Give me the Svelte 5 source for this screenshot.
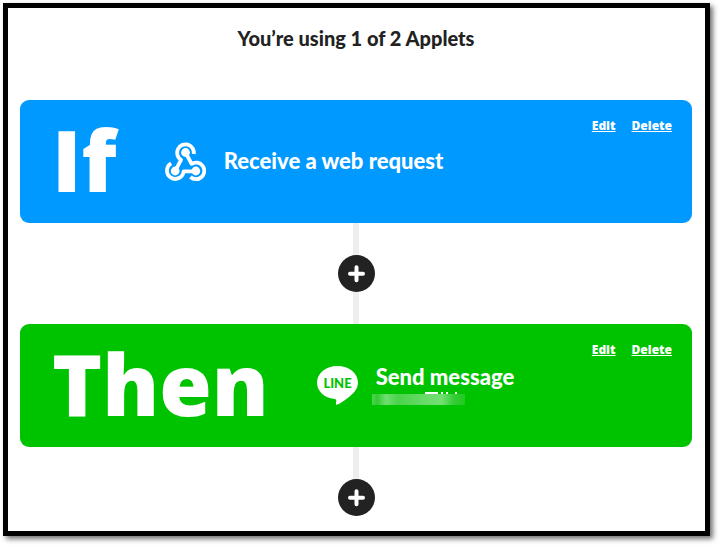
<script lang="ts">
	type Step = {
		label: string;
		service: 'webhook' | 'line';
		title: string;
		masked: boolean;
	};

	const used = 1;
	const limit = 2;

	const steps: Step[] = [
		{ label: 'If', service: 'webhook', title: 'Receive a web request', masked: false },
		{ label: 'Then', service: 'line', title: 'Send message', masked: true }
	];
</script>

<main class="frame">
	<h1>You’re using {used} of {limit} Applets</h1>

	{#each steps as step}
		<section class="card {step.service}">
			<h2>{step.label}</h2>

			{#if step.service === 'webhook'}
				<svg class="icon" viewBox="4 5 41 41" aria-hidden="true">
					<g fill="none" stroke="#fff" stroke-width="3.8" stroke-linejoin="round">
						<path d="M32.8 18A8.4 8.4 0 1 0 20 23.8L14.2 35" />
						<path d="M24.5 16.5L30.6 27.8A8.3 8.3 0 1 1 29.4 41" />
						<path d="M10.2 27.4A8.3 8.3 0 1 0 22.6 35.3H35" />
					</g>
					<g fill="#fff">
						<circle cx="24.5" cy="16.5" r="4.4" />
						<circle cx="14.2" cy="35" r="4.4" />
						<circle cx="34.8" cy="35" r="4.4" />
					</g>
				</svg>
			{:else}
				<svg class="icon" viewBox="0 0 41 41" aria-hidden="true">
					<path
						d="M20.5 1C32 1 41 8.3 41 17.5C41 24.5 35.5 29.5 30 33.5C26.5 36.2 22.5 38.8 20.5 39.6C18.5 40.3 19 38.5 19.2 37C19.4 35.3 19.2 34.3 17.5 34C7.5 33 0 26.3 0 17.5C0 8.3 9 1 20.5 1Z"
						fill="#fff"
					/>
					<text x="20.5" y="23" text-anchor="middle">LINE</text>
				</svg>
			{/if}

			<div class="detail">
				<h3>{step.title}</h3>
				{#if step.masked}
					<svg class="mask" viewBox="0 0 93 13" aria-hidden="true">
						<defs>
							<linearGradient id="veil">
								<stop offset="0" stop-color="#4fd34f" />
								<stop offset="0.06" stop-color="#33cc33" />
								<stop offset="0.15" stop-color="#6fdf6f" />
								<stop offset="0.28" stop-color="#4ad34a" />
								<stop offset="0.55" stop-color="#66da66" />
								<stop offset="0.75" stop-color="#72e072" />
								<stop offset="0.88" stop-color="#33cd33" />
								<stop offset="1" stop-color="#22c922" />
							</linearGradient>
						</defs>
						<rect y="2" width="93" height="11" fill="url(#veil)" />
						<path d="M53 1H66M69 1H71M74 1H76M83 1H85" stroke="#fff" stroke-width="2" />
					</svg>
				{/if}
			</div>

			<nav>
				<a href="#edit">Edit</a>
				<a href="#delete">Delete</a>
			</nav>
		</section>

		<div class="connector">
			<button type="button" aria-label="Add a step">
				<svg viewBox="0 0 37 37" aria-hidden="true">
					<path d="M18.5 12.2V25.2M12 18.7H25" />
				</svg>
			</button>
		</div>
	{/each}
</main>

<style>
	:global(body) {
		margin: 0;
		background: #fff;
		font-family: Lato, 'Open Sans', sans-serif;
	}

	.frame {
		margin: 3px 10px 10px 3px;
		padding: 0 13px 15px 12px;
		border: 5px solid #000;
		background: #fff;
		box-shadow: 3px 3px 5px rgb(0 0 0 / 0.55);
	}

	h1,
	h2,
	h3 {
		margin: 0;
	}

	h1 {
		padding: 18px 0 50px;
		font-size: 20px;
		font-weight: 900;
		line-height: 24px;
		text-align: center;
		color: #222;
	}

	.card {
		display: flex;
		align-items: center;
		box-sizing: border-box;
		min-height: 123px;
		padding: 0 20px 0 32px;
		border-radius: 9px;
		color: #fff;
	}

	.webhook {
		background: #0099ff;
	}

	.line {
		background: #00c300;
	}

	h2 {
		padding-bottom: 6px;
		font-family: 'Open Sans', sans-serif;
		font-size: 85px;
		font-weight: 800;
		line-height: 112px;
	}

	.icon {
		flex: none;
		width: 41px;
		height: 41px;
		margin: 0 18px 0 48px;
	}

	.icon text {
		font-size: 13px;
		font-weight: 900;
		fill: #00c300;
	}

	.detail {
		padding-bottom: 2px;
	}

	h3 {
		font-size: 22px;
		font-weight: 900;
		line-height: 26px;
	}

	.mask {
		display: block;
		width: 93px;
		height: 13px;
		margin: 2px 0 0 -4px;
	}

	nav {
		display: flex;
		gap: 16px;
		align-self: flex-start;
		margin-left: auto;
		padding-top: 18px;
	}

	a {
		font-family: 'Open Sans', sans-serif;
		font-size: 12px;
		font-weight: 800;
		line-height: 16px;
		color: inherit;
	}

	.connector {
		display: flex;
		justify-content: center;
		padding: 32px 0;
		background: linear-gradient(#eee, #eee) center / 6px 100% no-repeat;
	}

	.connector:last-child {
		padding-bottom: 0;
	}

	button {
		width: 37px;
		height: 37px;
		padding: 0;
		border: 0;
		border-radius: 50%;
		background: #222;
		cursor: pointer;
	}

	button svg {
		display: block;
	}

	button path {
		fill: none;
		stroke: #fff;
		stroke-width: 4;
		stroke-linecap: round;
	}
</style>
